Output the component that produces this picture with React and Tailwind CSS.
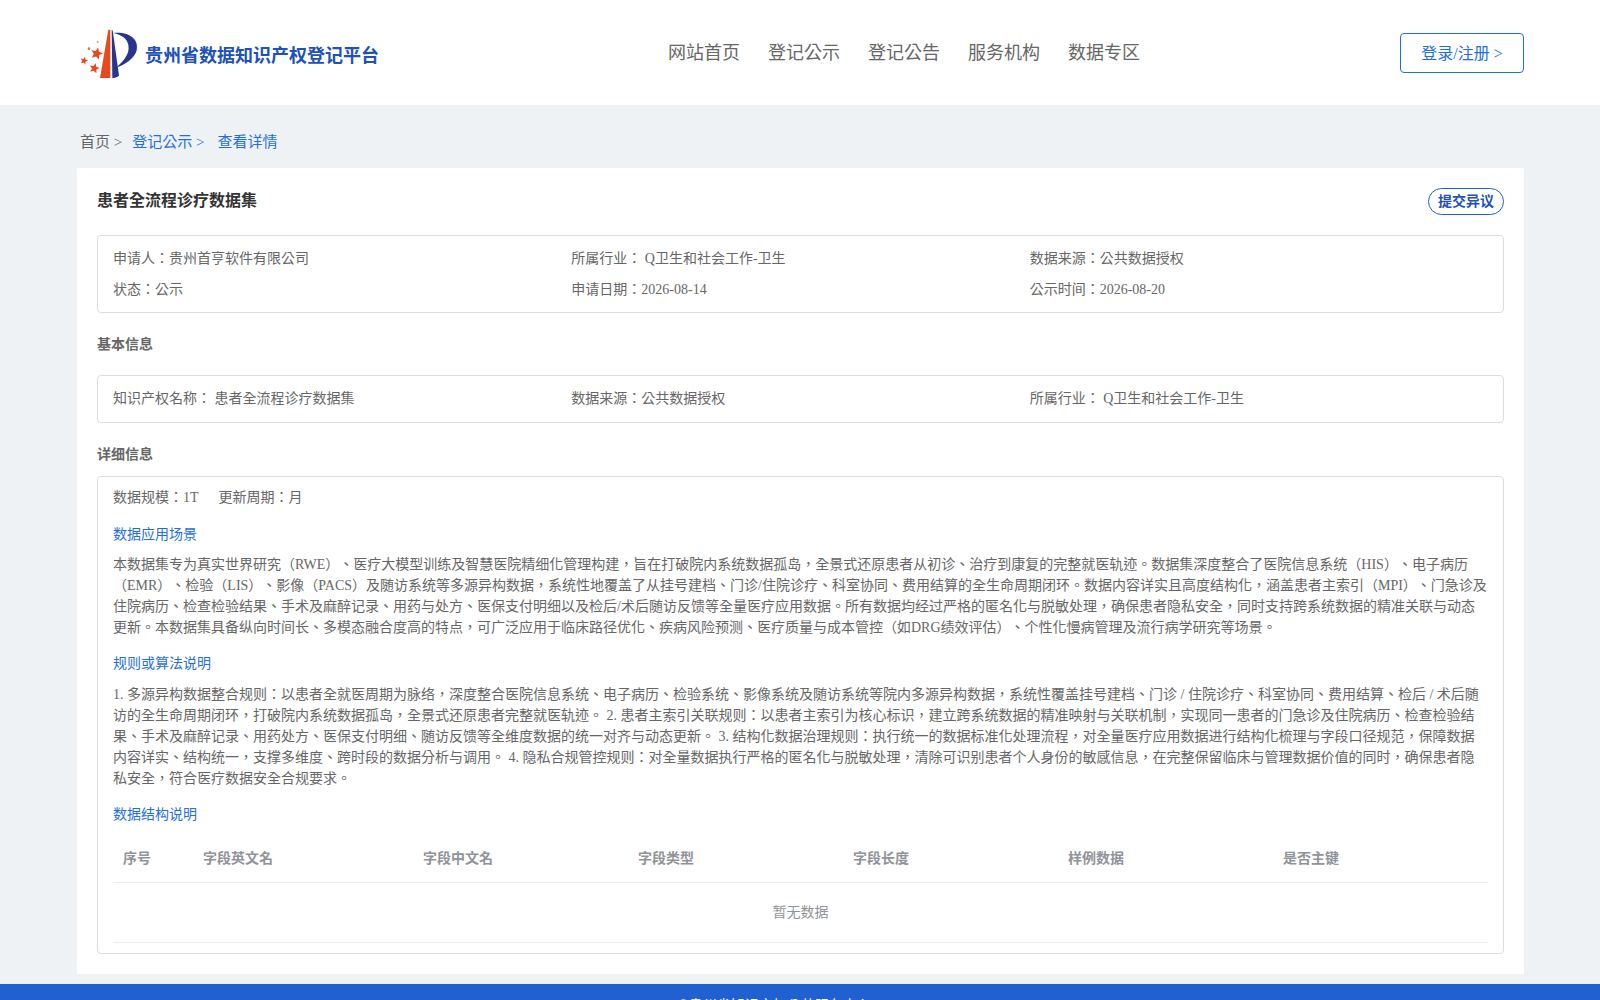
const Star = ({ x, y, r }) => {
  const pts = [];
  for (let i = 0; i < 10; i++) {
    const a = (Math.PI / 5) * i - Math.PI / 2 + 0.25;
    const d = i % 2 === 0 ? r : r * 0.45;
    pts.push(`${x + d * Math.cos(a)},${y + d * Math.sin(a)}`);
  }
  return <polygon points={pts.join(" ")} fill="#e8481c" />;
};

const Logo = () => (
  <svg width="70" height="60" viewBox="0 0 210 180" className="shrink-0">
    <path d="M75 165 L100 20 L106 20 L106 165 Z" fill="#e8481c" />
    <path d="M110 22 L113 22 L132 158 C126 162 119 165 112 166 Z" fill="#27358f" />
    <path d="M115 30 C165 26 192 50 185 82 C179 107 150 125 122 135 C148 112 165 92 160 66 C156 46 140 36 115 30 Z" fill="#27358f" />
    <Star x={65} y={92} r={19} />
    <Star x={58} y={136} r={16} />
    <Star x={27} y={113} r={12} />
    <circle cx="42" cy="77" r="4" fill="#e8703c" />
    <circle cx="68" cy="57" r="3" fill="#ee8f6a" />
  </svg>
);

const nav = ["网站首页", "登记公示", "登记公告", "服务机构", "数据专区"];
const fields = ["序号", "字段英文名", "字段中文名", "字段类型", "字段长度", "样例数据", "是否主键"];
const widths = ["w-[80px]", "w-[220px]", "w-[215px]", "w-[215px]", "w-[215px]", "w-[215px]", "w-[215px]"];

const Row = ({ children }) => <div className="grid grid-cols-3 text-[14px]">{children}</div>;

const SubTitle = ({ children }) => <p className="text-[14px] leading-[22px] text-[#1f6fe0]">{children}</p>;

const App = () => {
  return (
    <div className="h-[1000px] overflow-hidden bg-[#eff2f5] font-['Liberation_Serif','Noto_Sans_CJK_TC',serif] text-[#666] [text-spacing-trim:space-all]">
      <header className="flex h-[105px] items-center bg-white pl-[75px] pr-[76px]">
        <div className="flex w-[593px] items-center">
          <Logo />
          <span className="mt-[3px] font-['Noto_Sans_CJK_TC',sans-serif] text-[18px] font-bold text-[#2051b8]">贵州省数据知识产权登记平台</span>
        </div>
        <nav className="mt-[1px] flex gap-[28px] text-[18px] text-[#666]">
          {nav.map((item) => (
            <a key={item}>{item}</a>
          ))}
        </nav>
        <button className="ml-auto h-[40px] w-[124px] rounded border border-[#1f6fe0] pt-[2px] text-[16px] text-[#1f6fe0]">登录/注册 &gt;</button>
      </header>

      <div className="flex h-[63px] items-center pl-[80px] pt-[12px] text-[15px]">
        <span className="text-[#666]">首页 &gt;</span>
        <span className="ml-[10px] text-[#1f6fe0]">登记公示 &gt;</span>
        <span className="ml-[13px] text-[#1f6fe0]">查看详情</span>
      </div>

      <main className="ml-[77px] mr-[76px] h-[806px] bg-white px-[20px] pt-[20px]">
        <div className="flex items-start justify-between">
          <h1 className="pt-[1px] text-[16px] leading-[24px] font-bold text-[#333]">患者全流程诊疗数据集</h1>
          <button className="h-[27px] rounded-[14px] border border-[#1f5fd0] px-[9px] text-[14px] font-bold text-[#2051b8]">提交异议</button>
        </div>

        <div className="mt-[20px] flex h-[78px] flex-col justify-center gap-[10px] rounded border border-[#ddd] px-[15px]">
          <Row>
            <span>申请人：贵州首亨软件有限公司</span>
            <span>所属行业： Q卫生和社会工作-卫生</span>
            <span>数据来源：公共数据授权</span>
          </Row>
          <Row>
            <span>状态：公示</span>
            <span>申请日期：2026-08-14</span>
            <span>公示时间：2026-08-20</span>
          </Row>
        </div>

        <h2 className="mt-[21px] text-[14px] leading-[22px] font-bold">基本信息</h2>

        <div className="mt-[19px] flex h-[48px] items-center rounded border border-[#ddd] px-[15px] pb-[2px]">
          <div className="w-full">
            <Row>
              <span>知识产权名称： 患者全流程诊疗数据集</span>
              <span>数据来源：公共数据授权</span>
              <span>所属行业： Q卫生和社会工作-卫生</span>
            </Row>
          </div>
        </div>

        <h2 className="mt-[21px] text-[14px] leading-[22px] font-bold">详细信息</h2>

        <div className="mt-[10px] rounded border border-[#ddd] px-[15px] pt-[10px] text-[14px]">
          <p className="leading-[22px]">数据规模：1T<span className="ml-[20px]">更新周期：月</span></p>
          <div className="mt-[15px]"><SubTitle>数据应用场景</SubTitle></div>
          <p className="mt-[8px] leading-[21px]">本数据集专为真实世界研究（RWE）、医疗大模型训练及智慧医院精细化管理构建，旨在打破院内系统数据孤岛，全景式还原患者从初诊、治疗到康复的完整就医轨迹。数据集深度整合了医院信息系统（HIS）、电子病历（EMR）、检验（LIS）、影像（PACS）及随访系统等多源异构数据，系统性地覆盖了从挂号建档、门诊/住院诊疗、科室协同、费用结算的全生命周期闭环。数据内容详实且高度结构化，涵盖患者主索引（MPI）、门急诊及住院病历、检查检验结果、手术及麻醉记录、用药与处方、医保支付明细以及检后/术后随访反馈等全量医疗应用数据。所有数据均经过严格的匿名化与脱敏处理，确保患者隐私安全，同时支持跨系统数据的精准关联与动态更新。本数据集具备纵向时间长、多模态融合度高的特点，可广泛应用于临床路径优化、疾病风险预测、医疗质量与成本管控（如DRG绩效评估）、个性化慢病管理及流行病学研究等场景。</p>
          <div className="mt-[15px]"><SubTitle>规则或算法说明</SubTitle></div>
          <p className="mt-[9px] leading-[21px]">1. 多源异构数据整合规则：以患者全就医周期为脉络，深度整合医院信息系统、电子病历、检验系统、影像系统及随访系统等院内多源异构数据，系统性覆盖挂号建档、门诊 / 住院诊疗、科室协同、费用结算、检后 / 术后随访的全生命周期闭环，打破院内系统数据孤岛，全景式还原患者完整就医轨迹。 2. 患者主索引关联规则：以患者主索引为核心标识，建立跨系统数据的精准映射与关联机制，实现同一患者的门急诊及住院病历、检查检验结果、手术及麻醉记录、用药处方、医保支付明细、随访反馈等全维度数据的统一对齐与动态更新。 3. 结构化数据治理规则：执行统一的数据标准化处理流程，对全量医疗应用数据进行结构化梳理与字段口径规范，保障数据内容详实、结构统一，支撑多维度、跨时段的数据分析与调用。 4. 隐私合规管控规则：对全量数据执行严格的匿名化与脱敏处理，清除可识别患者个人身份的敏感信息，在完整保留临床与管理数据价值的同时，确保患者隐私安全，符合医疗数据安全合规要求。</p>
          <div className="mt-[15px]"><SubTitle>数据结构说明</SubTitle></div>

          <div className="mt-[9px] flex h-[48px] items-center border-b border-[#ebeef5] text-[14px] font-bold text-[#909399]">
            {fields.map((f, i) => (
              <div key={f} className={`${widths[i]} px-[10px]`}>{f}</div>
            ))}
          </div>
          <div className="flex h-[60px] items-center justify-center border-b border-[#ebeef5] text-[#909399]">暂无数据</div>
          <div className="h-[10px]" />
        </div>
      </main>

      <footer className="mt-[10px] h-[40px] bg-[#2060d0] pl-[678px] pt-[11px] text-[14px] text-white">©贵州省知识产权公共服务中心</footer>
    </div>
  );
};

export default App;
